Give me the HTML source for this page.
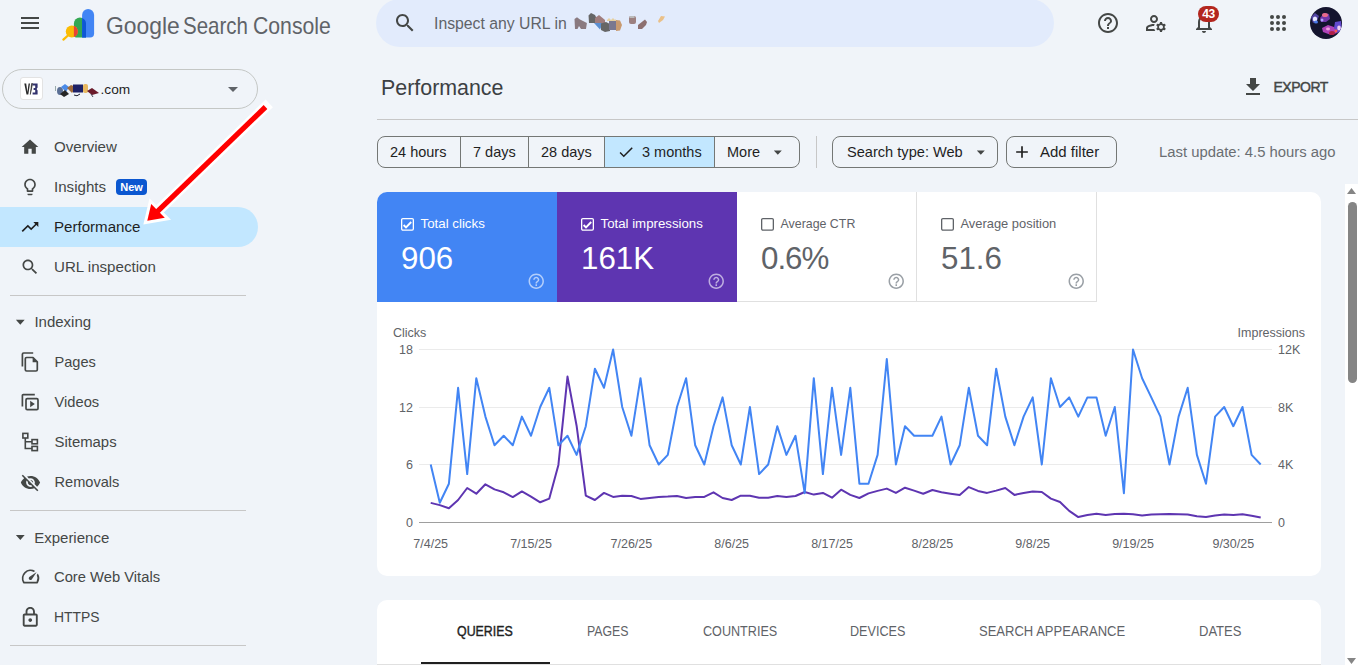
<!DOCTYPE html>
<html><head><meta charset="utf-8"><style>
html,body{margin:0;padding:0;width:1358px;height:665px;overflow:hidden;background:#f0f4f9;position:relative}
body{font-family:"Liberation Sans",sans-serif}
.t{position:absolute;line-height:1;white-space:nowrap}
.box{position:absolute;box-sizing:content-box}
.ic{position:absolute;overflow:visible}
</style></head><body>
<svg class="ic" style="left:18px;top:11px;width:24px;height:24px" viewBox="0 0 24 24"><path fill="#444746" d="M3 18h18v-2H3v2zm0-5h18v-2H3v2zm0-7v2h18V6H3z"/></svg>
<svg class="ic" style="left:58px;top:5px;width:40px;height:40px" viewBox="0 0 40 40">
<path d="M15.9 18.6 A6.05 6.05 0 0 1 28 18.6 V32.5 H19 Q15.9 32.5 15.9 29.4 Z" fill="#34a853"/>
<path d="M24.1 9.9 A6 6 0 0 1 36.1 9.9 V28.5 Q36.1 32.5 32.1 32.5 H24.1 Z" fill="#4285f4"/>
<path d="M24.1 32.5 V12.94 A6.05 6.05 0 0 1 28 18.6 V32.5 Z" fill="#0e58d4"/>
<line x1="10.5" y1="30" x2="5.4" y2="34.6" stroke="#fbbc04" stroke-width="2.3" stroke-linecap="round"/>
<circle cx="13.8" cy="26.4" r="6" fill="#fbbc04"/>
<path d="M15.9 20.78 A6 6 0 0 1 15.9 32.02 Z" fill="#ea4335"/>
</svg>
<div class="t" style="left:105.5px;top:14px;font-size:24px;color:#5f6368;transform:scaleX(0.953);transform-origin:0 0">Google</div>
<div class="t" style="left:183.2px;top:14px;font-size:24px;color:#5f6368;transform:scaleX(0.854);transform-origin:0 0">Search</div>
<div class="t" style="left:252.9px;top:14px;font-size:24px;color:#5f6368;transform:scaleX(0.884);transform-origin:0 0">Console</div>
<div class="box" style="left:376px;top:-1px;width:678px;height:48px;border-radius:24px;background:#e2ebfc"></div>
<svg class="ic" style="left:393px;top:11px;width:24px;height:24px" viewBox="0 0 24 24"><path fill="#444746" d="M15.5 14h-.79l-.28-.27C15.41 12.59 16 11.11 16 9.5 16 5.91 13.09 3 9.5 3S3 5.910 3 9.5 5.91 16 9.5 16c1.61 0 3.09-.59 4.23-1.57l.27.28v.79l5 4.99L20.49 19l-4.99-5zm-6 0C7.01 14 5 11.99 5 9.5S7.01 5 9.5 5 14 7.01 14 9.5 11.99 14 9.5 14z"/></svg>
<div class="t " style="left:433.5px;top:16px;font-size:16.8px;color:#5f6368;font-weight:400;transform:scaleX(0.94);transform-origin:0 0">Inspect any URL in</div>
<svg class="ic" style="left:565px;top:10px;width:110px;height:25px" viewBox="0 0 110 25"><path d="M9.5 9 L12 7.3 L15 9.5 L18 11 L21.9 13 L21 19 L16 19 L14 16 L12.5 19 L10 19 Z" fill="#8a7a80"/><path d="M23.5 5.5 L26 3 L30 5 L31.5 8 L32 13 L24 13 Z" fill="#666"/><path d="M30 8 L34 5 L40 10 L40 13 L30 13 Z" fill="#a07d7d"/><path d="M29 13 H38 L35 19.6 Z" fill="#5b8fd0"/><path d="M36 13.5 L41 12 L45 14 L45 21 L40 22 L36 20 Z" fill="#666"/><rect x="44" y="10" width="7" height="10" fill="#7a7890"/><path d="M51 10 L55 10.5 L57 15 L55 20.5 L51 21 Z" fill="#c89a70"/><path d="M42 10 L44 8 L46 10 L48 8 L50 10 L51 9 V11 H42 Z" fill="#e6d0a0"/><rect x="64" y="6" width="7" height="8" rx="2" fill="#9c8080"/><rect x="64.5" y="6" width="5" height="2" fill="#bbb"/><path d="M73 15 L80 9.5 L82 12 L81 15 L77 19 L73 19 Z" fill="#8d7070"/><path d="M93 11 L96 6 L100 6.5 L98 10 L94 13 Z" fill="#eac088"/></svg>
<svg class="ic" style="left:1096px;top:11px;width:24px;height:24px" viewBox="0 0 24 24"><path fill="#444746" d="M11 18h2v-2h-2v2zm1-16C6.48 2 2 6.48 2 12s4.48 10 10 10 10-4.48 10-10S17.520 2 12 2zm0 18c-4.41 0-8-3.59-8-8s3.59-8 8-8 8 3.59 8 8-3.59 8-8 8zm0-14c-2.21 0-4 1.79-4 4h2c0-1.1.9-2 2-2s2 .9 2 2c0 2-3 1.75-3 5h2c0-2.25 3-2.5 3-5 0-2.21-1.79-4-4-4z"/></svg>
<svg class="ic" style="left:1144px;top:11px;width:24px;height:24px" viewBox="0 0 24 24"><path fill="#444746" d="M4 18v-.65c0-.34.16-.66.41-.81C6.1 15.53 8.03 15 10 15c.03 0 .05 0 .08.01.1-.7.3-1.37.59-1.98-.22-.02-.44-.03-.67-.03-2.42 0-4.68.67-6.61 1.820-.88.52-1.39 1.5-1.39 2.53V20h9.26c-.42-.6-.75-1.28-.97-2H4zm6-6c2.21 0 4-1.79 4-4s-1.79-4-4-4-4 1.79-4 4 1.79 4 4 4zm0-6c1.1 0 2 .9 2 2s-.9 2-2 2-2-.9-2-2 .9-2 2-2zm10.75 10c0-.22-.03-.42-.06-.63l1.14-1.01-1-1.73-1.45.49c-.32-.27-.68-.48-1.08-.63L18 11h-2l-.3 1.49c-.4.15-.76.36-1.08.63l-1.45-.49-1 1.73 1.14 1.01c-.03.21-.06.41-.06.63s.03.42.06.63l-1.14 1.01 1 1.73 1.45-.49c.32.27.68.48 1.08.63L16 21h2l.3-1.49c.4-.15.76-.36 1.08-.63l1.45.49 1-1.73-1.14-1.01c.03-.21.06-.41.06-.63zM17 18c-1.1 0-2-.9-2-2s.9-2 2-2 2 .9 2 2-.9 2-2 2z"/></svg>
<svg class="ic" style="left:1192px;top:11px;width:24px;height:24px" viewBox="0 0 24 24"><path fill="#444746" d="M12 22c1.1 0 2-.9 2-2h-4c0 1.1.89 2 2 2zm6-6v-5c0-3.07-1.64-5.64-4.5-6.32V4c0-.83-.67-1.5-1.5-1.5s-1.5.67-1.5 1.5v.68C7.63 5.36 6 7.92 6 11v5l-2 2v1h16v-1l-2-2zm-2 1H8v-6c0-2.48 1.51-4.5 4-4.5s4 2.02 4 4.5v6z"/></svg>
<div class="box" style="left:1198px;top:6px;width:21px;height:16px;border-radius:8px;background:#b3261e;color:#fff;font:bold 12px/16px 'Liberation Sans';text-align:center;letter-spacing:-0.3px">43</div>
<svg class="ic" style="left:1268px;top:13px;width:16px;height:16px" viewBox="0 0 16 16"><circle cx="4" cy="4" r="2" fill="#444746"/><circle cx="4" cy="10" r="2" fill="#444746"/><circle cx="4" cy="16" r="2" fill="#444746"/><circle cx="10" cy="4" r="2" fill="#444746"/><circle cx="10" cy="10" r="2" fill="#444746"/><circle cx="10" cy="16" r="2" fill="#444746"/><circle cx="16" cy="4" r="2" fill="#444746"/><circle cx="16" cy="10" r="2" fill="#444746"/><circle cx="16" cy="16" r="2" fill="#444746"/></svg>
<div class="box" style="left:1310px;top:7px;width:32px;height:32px;border-radius:50%;overflow:hidden"><svg style="position:absolute;left:0;top:0;width:32px;height:32px" viewBox="0 0 32 32">
<g><rect width="32" height="32" fill="#14142e"/>
<path d="M1 10 L5 6 L9 9 L7 14 L3 16 Z" fill="#5a4ab0" opacity="0.9"/>
<ellipse cx="5" cy="12" rx="2.2" ry="2.6" fill="#e8e8ff"/>
<ellipse cx="6" cy="15" rx="2" ry="1.6" fill="#4a7ae8"/>
<path d="M10 11 L14 6 L19 7 L20 12 L16 15 L11 15 Z" fill="#7a3ab8" opacity="0.9"/>
<ellipse cx="15" cy="8" rx="3" ry="2" fill="#e86a8a"/>
<ellipse cx="12" cy="13" rx="1.5" ry="1.5" fill="#b0a0ff"/>
<path d="M12 21 L18 18 L24 20 L27 26 L21 28 L13 25 Z" fill="#c048c8" opacity="0.9"/>
<ellipse cx="22" cy="26" rx="3" ry="2" fill="#b02048"/>
<ellipse cx="18" cy="22" rx="2" ry="1.4" fill="#f0a0e0"/>
<path d="M25 15 L31 14 L32 24 L27 26 L24 21 Z" fill="#6a50e0" opacity="0.9"/>
<ellipse cx="29" cy="21" rx="1.8" ry="2.4" fill="#f0d0f0"/>
<ellipse cx="26" cy="24" rx="1.4" ry="1.4" fill="#ff5a50"/>
</g></svg></div>
<div class="box" style="left:2px;top:69px;width:254px;height:38px;border:1px solid #c4c7c5;border-radius:20px"></div>
<div class="box" style="left:19.5px;top:77px;width:21px;height:21px;background:#fff;border:1px solid #e3e3e3;border-radius:3px"></div>
<svg class="ic" style="left:24px;top:83px;width:14px;height:12px" viewBox="0 0 14 12"><path d="M0.3 0.5 H2.2 L3.4 9 L4.6 0.5 H6 L4.3 11.5 H2.5 Z" fill="#2a2a2a"/><path d="M6.3 11.5 L8.6 0.5 H7.6 Z" fill="#2a2a2a" stroke="#2a2a2a" stroke-width="0.6"/><path d="M8.6 0.5 H13.6 V4.5 L12.6 6 L13.6 7.5 V11.5 H8.6 V9.5 H11.2 V7 H9.6 V5 H11.2 V2.5 H8.6 Z" fill="#33336e"/></svg>
<svg class="ic" style="left:54px;top:83px;width:48px;height:16px" viewBox="0 0 48 16"><rect x="1" y="3" width="1" height="5" fill="#9aa"/><ellipse cx="6" cy="8" rx="3" ry="4" fill="#5a6f95"/><path d="M7 4 L11 1 L15 4 L12 9 Z" fill="#4a8ae8"/><path d="M6 11 L11 7 L15 11 L10 14 Z" fill="#262626"/><path d="M13 5 L17 2 L22 4 L18 10 Z" fill="#a06a3a"/><rect x="19" y="1.5" width="10" height="8" fill="#1d2166"/><path d="M20 12 Q23 14 26 11" stroke="#223" stroke-width="1" fill="none"/><rect x="29" y="1" width="5" height="9" rx="2" fill="#e8b860"/><path d="M33 8 L38 5 L45 10 L38 12 Z" fill="#6a1a2a"/><path d="M37 11 L39 14" stroke="#445" stroke-width="1"/></svg>
<div class="t " style="left:100.5px;top:83px;font-size:13.7px;color:#1f1f1f;font-weight:400;">.com</div>
<svg class="ic" style="left:221px;top:77px;width:24px;height:24px" viewBox="0 0 24 24"><path fill="#5f6368" d="M7 10l5 5 5-5z"/></svg>
<div class="box" style="left:0;top:207px;width:258px;height:40px;border-radius:0 20px 20px 0;background:#c2e7ff"></div>
<svg class="ic" style="left:20px;top:137px;width:20px;height:20px" viewBox="0 0 24 24"><path fill="#444746" d="M10 20v-6h4v6h5v-8h3L12 3 2 12h3v8z"/></svg>
<div class="t " style="left:54px;top:139px;font-size:15.1px;color:#444746;font-weight:400;">Overview</div>
<svg class="ic" style="left:20px;top:177px;width:20px;height:20px" viewBox="0 0 24 24"><path fill="#444746" d="M9 21c0 .55.45 1 1 1h4c.55 0 1-.45 1-1v-1H9v1zm3-19C8.14 2 5 5.14 5 9c0 2.38 1.19 4.47 3 5.74V17c0 .55.45 1 1 1h6c.55 0 1-.45 1-1v-2.26c1.81-1.27 3-3.36 3-5.74 0-3.86-3.14-7-7-7zm2.85 11.1l-.85.6V16h-4v-2.3l-.85-.6C7.8 12.16 7 10.630 7 9c0-2.76 2.24-5 5-5s5 2.24 5 5c0 1.63-.8 3.16-2.15 4.1z"/></svg>
<div class="t " style="left:54px;top:179px;font-size:15.1px;color:#444746;font-weight:400;">Insights</div>
<svg class="ic" style="left:20px;top:217px;width:20px;height:20px" viewBox="0 0 24 24"><path fill="#1f1f1f" d="M16 6l2.29 2.29-4.88 4.88-4-4L2 16.59 3.41 18l6-6 4 4 6.3-6.29L22 12V6z"/></svg>
<div class="t " style="left:54px;top:219px;font-size:15.1px;color:#1f1f1f;font-weight:400;">Performance</div>
<svg class="ic" style="left:20px;top:257px;width:20px;height:20px" viewBox="0 0 24 24"><path fill="#444746" d="M15.5 14h-.79l-.28-.27C15.41 12.59 16 11.11 16 9.5 16 5.91 13.09 3 9.5 3S3 5.910 3 9.5 5.91 16 9.5 16c1.61 0 3.09-.59 4.23-1.57l.27.28v.79l5 4.99L20.49 19l-4.99-5zm-6 0C7.01 14 5 11.99 5 9.5S7.01 5 9.5 5 14 7.01 14 9.5 11.99 14 9.5 14z"/></svg>
<div class="t " style="left:54px;top:259px;font-size:15.1px;color:#444746;font-weight:400;">URL inspection</div>
<div class="box" style="left:10px;top:229px;width:45px;height:0"></div>
<div class="box" style="left:116px;top:179px;width:31px;height:16px;border-radius:4px;background:#0b57d0;color:#fff;font:bold 11px/16px 'Liberation Sans';text-align:center">New</div>
<div class="box" style="left:10px;top:295px;width:236px;height:1px;background:#c7c7c7"></div>
<svg class="ic" style="left:0;top:0;width:30px;height:665px" viewBox="0 0 30 665"><path d="M15.9 319.8 H24.7 L20.3 324.7 Z M15.9 535 H24.7 L20.3 539.9 Z" fill="#444746"/></svg>
<div class="t " style="left:34.4px;top:314px;font-size:15px;color:#444746;font-weight:400;">Indexing</div>
<svg class="ic" style="left:20px;top:350px;width:20px;height:24px" viewBox="0 0 20 24"><path d="M2.4 16.4 V4.2 Q2.4 3 3.6 3 H13.2" fill="none" stroke="#444746" stroke-width="1.7"/><path d="M6.6 7.5 H13 L17.3 11.8 V19.7 Q17.3 21 16 21 H6.6 Q5.3 21 5.3 19.7 V8.8 Q5.3 7.5 6.6 7.5 Z" fill="none" stroke="#444746" stroke-width="1.7" stroke-linejoin="round"/><path d="M12.6 7.5 L17.3 12.2 H12.6 Z" fill="#444746"/></svg>
<div class="t " style="left:54.5px;top:355px;font-size:14.6px;color:#444746;font-weight:400;">Pages</div>
<svg class="ic" style="left:20px;top:392px;width:20px;height:20px" viewBox="0 0 20 20"><path d="M2.4 14.5 V3.5 Q2.4 2.6 3.3 2.6 H14.8" fill="none" stroke="#444746" stroke-width="1.7"/><rect x="6" y="6.7" width="12" height="10.9" rx="1.2" fill="none" stroke="#444746" stroke-width="1.7"/><path d="M10.2 8.8 L14.8 12.1 L10.2 15.3 Z" fill="#444746"/></svg>
<div class="t " style="left:54.5px;top:395px;font-size:14.7px;color:#444746;font-weight:400;">Videos</div>
<svg class="ic" style="left:20px;top:430px;width:20px;height:24px" viewBox="0 0 20 24"><rect x="2.9" y="3.4" width="4.9" height="4.6" fill="none" stroke="#444746" stroke-width="1.6"/><rect x="12" y="9.6" width="5.4" height="4.2" fill="none" stroke="#444746" stroke-width="1.6"/><rect x="12" y="16.4" width="5.4" height="4.2" fill="none" stroke="#444746" stroke-width="1.6"/><path d="M5.3 8 V18.5 H12 M5.3 11.7 H12" fill="none" stroke="#444746" stroke-width="1.6"/></svg>
<div class="t " style="left:54.5px;top:435px;font-size:14.9px;color:#444746;font-weight:400;">Sitemaps</div>
<svg class="ic" style="left:19.5px;top:472px;width:21px;height:21px" viewBox="0 0 24 24"><path fill="#444746" d="M12 7c2.76 0 5 2.24 5 5 0 .65-.13 1.26-.36 1.83l2.92 2.92c1.51-1.26 2.7-2.89 3.43-4.75-1.73-4.39-6-7.5-11-7.5-1.4 0-2.74.25-3.98.7l2.16 2.16C10.74 7.13 11.35 7 12 7zM2 4.27l2.28 2.28.46.46C3.08 8.3 1.78 10.02 1 12c1.73 4.39 6 7.5 11 7.5 1.55 0 3.03-.3 4.38-.84l.42.42L19.73 22 21 20.73 3.27 3 2 4.27zM7.53 9.8l1.55 1.55c-.05.21-.08.43-.08.65 0 1.66 1.34 3 3 3 .22 0 .44-.03.65-.08l1.55 1.55c-.67.33-1.41.53-2.2.53-2.76 0-5-2.24-5-5 0-.79.2-1.53.53-2.2zm4.31-.78l3.15 3.15.02-.16c0-1.66-1.34-3-3-3l-.17.01z"/></svg>
<div class="t " style="left:54.5px;top:475px;font-size:14.6px;color:#444746;font-weight:400;">Removals</div>
<div class="box" style="left:10px;top:510px;width:236px;height:1px;background:#c7c7c7"></div>
<div class="t " style="left:34.2px;top:530px;font-size:15px;color:#444746;font-weight:400;">Experience</div>
<svg class="ic" style="left:19.5px;top:566px;width:21px;height:21px" viewBox="0 0 24 24"><path fill="#444746" d="M20.38 8.57l-1.23 1.85a8 8 0 0 1-.22 7.58H5.07A8 8 0 0 1 15.58 6.85l1.85-1.23A10 10 0 0 0 3.35 19a2 2 0 0 0 1.72 1h13.85a2 2 0 0 0 1.74-1 10 10 0 0 0-.27-10.440zm-9.79 6.84a2 2 0 0 0 2.830 0l5.66-8.49-8.49 5.66a2 2 0 0 0 0 2.83z"/></svg>
<div class="t " style="left:54px;top:570px;font-size:14.75px;color:#444746;font-weight:400;">Core Web Vitals</div>
<svg class="ic" style="left:18.5px;top:606.3px;width:22.5px;height:22.5px" viewBox="0 0 24 24"><path fill="#444746" d="M18 8h-1V6c0-2.76-2.24-5-5-5S7 3.24 7 6v2H6c-1.1 0-2 .9-2 2v10c0 1.1.9 2 2 2h12c1.1 0 2-.9 2-2V10c0-1.1-.9-2-2-2zM9 6c0-1.66 1.34-3 3-3s3 1.34 3 3v2H9V6zm9 14H6V10h12v10zm-6-3c1.1 0 2-.9 2-2s-.9-2-2-2-2 .9-2 2 .9 2 2 2z"/></svg>
<div class="t " style="left:54px;top:611px;font-size:13.9px;color:#444746;font-weight:400;">HTTPS</div>
<div class="box" style="left:10px;top:645px;width:236px;height:1px;background:#c7c7c7"></div>
<div class="t " style="left:381px;top:78px;font-size:21.4px;color:#3c4043;font-weight:400;">Performance</div>
<svg class="ic" style="left:1241px;top:75px;width:24px;height:24px" viewBox="0 0 24 24"><path fill="#444746" d="M19 9h-4V3H9v6H5l7 7 7-7zM5 18v2h14v-2H5z"/></svg>
<div class="t " style="left:1273.5px;top:80px;font-size:14px;color:#444746;font-weight:400;letter-spacing:-0.5px;-webkit-text-stroke:0.45px #444746">EXPORT</div>
<div class="box" style="left:377px;top:119px;width:981px;height:1px;background:#c7c7c7"></div>
<div class="box" style="left:377px;top:136px;width:421px;height:30px;border:1px solid #747775;border-radius:8px;overflow:hidden"></div>
<div class="box" style="left:605px;top:137px;width:109px;height:30px;background:#c2e7ff"></div>
<div class="box" style="left:460px;top:137px;width:1px;height:30px;background:#747775"></div>
<div class="box" style="left:528px;top:137px;width:1px;height:30px;background:#747775"></div>
<div class="box" style="left:604px;top:137px;width:1px;height:30px;background:#747775"></div>
<div class="box" style="left:714px;top:137px;width:1px;height:30px;background:#747775"></div>
<div class="t " style="left:390px;top:145px;font-size:14.5px;color:#1f1f1f;font-weight:400;">24 hours</div>
<div class="t " style="left:473px;top:145px;font-size:14.5px;color:#1f1f1f;font-weight:400;">7 days</div>
<div class="t " style="left:541px;top:145px;font-size:14.5px;color:#1f1f1f;font-weight:400;">28 days</div>
<svg class="ic" style="left:617px;top:143px;width:18px;height:18px" viewBox="0 0 24 24"><path fill="#1f1f1f" d="M9 16.17L4.83 12l-1.42 1.41L9 19 21 7l-1.41-1.41z"/></svg>
<div class="t " style="left:642px;top:145px;font-size:14.5px;color:#1f1f1f;font-weight:400;">3 months</div>
<div class="t " style="left:727px;top:145px;font-size:14.5px;color:#1f1f1f;font-weight:400;">More</div>
<svg class="ic" style="left:0;top:0;width:1000px;height:200px" viewBox="0 0 1000 200"><path d="M773.8 150.6 H781.8 L777.8 154.8 Z M976.8 150.6 H984.8 L980.8 154.8 Z" fill="#444746"/></svg>
<div class="box" style="left:816px;top:136px;width:1px;height:32px;background:#c7c7c7"></div>
<div class="box" style="left:832px;top:136px;width:164px;height:30px;border:1px solid #747775;border-radius:8px"></div>
<div class="t " style="left:847px;top:145px;font-size:14.6px;color:#1f1f1f;font-weight:400;">Search type: Web</div>
<div class="box" style="left:1006px;top:136px;width:109px;height:30px;border:1px solid #747775;border-radius:8px"></div>
<svg class="ic" style="left:1012px;top:142px;width:20px;height:20px" viewBox="0 0 24 24"><path fill="#1f1f1f" d="M19 13h-6v6h-2v-6H5v-2h6V5h2v6h6v2z"/></svg>
<div class="t " style="left:1040px;top:144px;font-size:15px;color:#1f1f1f;font-weight:400;">Add filter</div>
<div class="t " style="left:1159px;top:145px;font-size:14.85px;color:#6a6e72;font-weight:400;">Last update: 4.5 hours ago</div>
<div class="box" style="left:377px;top:192px;width:944px;height:384px;background:#fff;border-radius:10px;overflow:hidden"><div class="box" style="left:0;top:0;width:180px;height:110px;background:#4285f4"></div><div class="box" style="left:180px;top:0;width:180px;height:110px;background:#5e35b1"></div><div class="box" style="left:360px;top:0;width:179px;height:109px;border-right:1px solid #e0e0e0;border-bottom:1px solid #e0e0e0"></div><div class="box" style="left:540px;top:0;width:179px;height:109px;border-right:1px solid #e0e0e0;border-bottom:1px solid #e0e0e0"></div></div>
<svg class="ic" style="left:401px;top:218px;width:13px;height:13px" viewBox="0 0 13 13"><rect x="0.65" y="0.65" width="11.7" height="11.4" rx="1.2" fill="none" stroke="#fff" stroke-width="1.3"/><path d="M2.6 7 L5 9.4 L10.2 4" fill="none" stroke="#fff" stroke-width="1.9"/></svg>
<div class="t " style="left:420.5px;top:217px;font-size:13.3px;color:#fff;font-weight:400;">Total clicks</div>
<div class="t " style="left:401px;top:243px;font-size:31.3px;color:#fff;font-weight:400;">906</div>
<svg class="ic" style="left:527px;top:271.8px;width:18.5px;height:18.5px" viewBox="0 0 24 24"><path fill="rgba(255,255,255,0.6)" d="M11 18h2v-2h-2v2zm1-16C6.48 2 2 6.48 2 12s4.48 10 10 10 10-4.48 10-10S17.520 2 12 2zm0 18c-4.41 0-8-3.59-8-8s3.59-8 8-8 8 3.59 8 8-3.59 8-8 8zm0-14c-2.21 0-4 1.79-4 4h2c0-1.1.9-2 2-2s2 .9 2 2c0 2-3 1.75-3 5h2c0-2.25 3-2.5 3-5 0-2.21-1.79-4-4-4z"/></svg>
<svg class="ic" style="left:581px;top:218px;width:13px;height:13px" viewBox="0 0 13 13"><rect x="0.65" y="0.65" width="11.7" height="11.4" rx="1.2" fill="none" stroke="#fff" stroke-width="1.3"/><path d="M2.6 7 L5 9.4 L10.2 4" fill="none" stroke="#fff" stroke-width="1.9"/></svg>
<div class="t " style="left:600.5px;top:217px;font-size:13.25px;color:#fff;font-weight:400;">Total impressions</div>
<div class="t " style="left:581px;top:243px;font-size:31.3px;color:#fff;font-weight:400;">161K</div>
<svg class="ic" style="left:707px;top:271.8px;width:18.5px;height:18.5px" viewBox="0 0 24 24"><path fill="rgba(255,255,255,0.6)" d="M11 18h2v-2h-2v2zm1-16C6.48 2 2 6.48 2 12s4.48 10 10 10 10-4.48 10-10S17.520 2 12 2zm0 18c-4.41 0-8-3.59-8-8s3.59-8 8-8 8 3.59 8 8-3.59 8-8 8zm0-14c-2.21 0-4 1.79-4 4h2c0-1.1.9-2 2-2s2 .9 2 2c0 2-3 1.75-3 5h2c0-2.25 3-2.5 3-5 0-2.21-1.79-4-4-4z"/></svg>
<svg class="ic" style="left:761px;top:218px;width:13px;height:13px" viewBox="0 0 13 13"><rect x="0.65" y="0.65" width="11.7" height="11.4" rx="1.2" fill="none" stroke="#5f6368" stroke-width="1.3"/></svg>
<div class="t " style="left:780.5px;top:218px;font-size:12.4px;color:#5f6368;font-weight:400;">Average CTR</div>
<div class="t " style="left:761px;top:243px;font-size:31.3px;color:#5f6368;font-weight:400;letter-spacing:-1px">0.6%</div>
<svg class="ic" style="left:887px;top:271.8px;width:18.5px;height:18.5px" viewBox="0 0 24 24"><path fill="#9aa0a6" d="M11 18h2v-2h-2v2zm1-16C6.48 2 2 6.48 2 12s4.48 10 10 10 10-4.48 10-10S17.520 2 12 2zm0 18c-4.41 0-8-3.59-8-8s3.59-8 8-8 8 3.59 8 8-3.59 8-8 8zm0-14c-2.21 0-4 1.79-4 4h2c0-1.1.9-2 2-2s2 .9 2 2c0 2-3 1.75-3 5h2c0-2.25 3-2.5 3-5 0-2.21-1.79-4-4-4z"/></svg>
<svg class="ic" style="left:941px;top:218px;width:13px;height:13px" viewBox="0 0 13 13"><rect x="0.65" y="0.65" width="11.7" height="11.4" rx="1.2" fill="none" stroke="#5f6368" stroke-width="1.3"/></svg>
<div class="t " style="left:960.5px;top:218px;font-size:12.9px;color:#5f6368;font-weight:400;">Average position</div>
<div class="t " style="left:941px;top:243px;font-size:31.3px;color:#5f6368;font-weight:400;">51.6</div>
<svg class="ic" style="left:1067px;top:271.8px;width:18.5px;height:18.5px" viewBox="0 0 24 24"><path fill="#9aa0a6" d="M11 18h2v-2h-2v2zm1-16C6.48 2 2 6.48 2 12s4.48 10 10 10 10-4.48 10-10S17.520 2 12 2zm0 18c-4.41 0-8-3.59-8-8s3.59-8 8-8 8 3.59 8 8-3.59 8-8 8zm0-14c-2.21 0-4 1.79-4 4h2c0-1.1.9-2 2-2s2 .9 2 2c0 2-3 1.75-3 5h2c0-2.25 3-2.5 3-5 0-2.21-1.79-4-4-4z"/></svg>
<div class="t " style="left:393px;top:327px;font-size:12.5px;color:#5f6368;font-weight:400;">Clicks</div>
<div class="t" style="left:1200px;top:327px;width:105px;text-align:right;font-size:12.5px;color:#5f6368">Impressions</div>
<div class="t" style="left:380px;top:344px;width:33px;text-align:right;font-size:12.5px;color:#5f6368">18</div>
<div class="t" style="left:380px;top:402px;width:33px;text-align:right;font-size:12.5px;color:#5f6368">12</div>
<div class="t" style="left:380px;top:459px;width:33px;text-align:right;font-size:12.5px;color:#5f6368">6</div>
<div class="t" style="left:380px;top:517px;width:33px;text-align:right;font-size:12.5px;color:#5f6368">0</div>
<div class="t" style="left:1278px;top:344px;font-size:12.5px;color:#5f6368">12K</div>
<div class="t" style="left:1278px;top:402px;font-size:12.5px;color:#5f6368">8K</div>
<div class="t" style="left:1278px;top:459px;font-size:12.5px;color:#5f6368">4K</div>
<div class="t" style="left:1278px;top:517px;font-size:12.5px;color:#5f6368">0</div>
<div class="t" style="left:390.7px;top:538px;width:80px;text-align:center;font-size:12.5px;color:#5f6368">7/4/25</div>
<div class="t" style="left:491.0px;top:538px;width:80px;text-align:center;font-size:12.5px;color:#5f6368">7/15/25</div>
<div class="t" style="left:591.4px;top:538px;width:80px;text-align:center;font-size:12.5px;color:#5f6368">7/26/25</div>
<div class="t" style="left:691.7px;top:538px;width:80px;text-align:center;font-size:12.5px;color:#5f6368">8/6/25</div>
<div class="t" style="left:792.0px;top:538px;width:80px;text-align:center;font-size:12.5px;color:#5f6368">8/17/25</div>
<div class="t" style="left:892.4px;top:538px;width:80px;text-align:center;font-size:12.5px;color:#5f6368">8/28/25</div>
<div class="t" style="left:992.7px;top:538px;width:80px;text-align:center;font-size:12.5px;color:#5f6368">9/8/25</div>
<div class="t" style="left:1093.0px;top:538px;width:80px;text-align:center;font-size:12.5px;color:#5f6368">9/19/25</div>
<div class="t" style="left:1193.3px;top:538px;width:80px;text-align:center;font-size:12.5px;color:#5f6368">9/30/25</div>
<svg class="ic" style="left:0;top:0;width:1358px;height:665px" viewBox="0 0 1358 665"><line x1="419" x2="1272" y1="349.5" y2="349.5" stroke="#ebebeb" stroke-width="1"/><line x1="419" x2="1272" y1="407.5" y2="407.5" stroke="#ebebeb" stroke-width="1"/><line x1="419" x2="1272" y1="464.5" y2="464.5" stroke="#ebebeb" stroke-width="1"/>
<line x1="419" x2="1272" y1="522.5" y2="522.5" stroke="#9e9e9e" stroke-width="1"/>
<polyline points="430.7,502.9 439.8,505.1 448.9,508.3 458.1,500.0 467.2,488.0 476.3,493.7 485.4,484.3 494.5,489.4 503.7,492.3 512.8,497.1 521.9,491.4 531.0,496.6 540.2,502.3 549.3,498.6 558.4,464.9 567.5,376.6 576.6,425.7 585.8,495.7 594.9,500.0 604.0,492.9 613.1,496.9 622.2,495.7 631.4,496.0 640.5,498.9 649.6,498.0 658.7,496.9 667.8,496.6 677.0,496.0 686.1,498.0 695.2,496.9 704.3,496.9 713.5,492.3 722.6,498.0 731.7,500.0 740.8,495.7 749.9,495.7 759.1,497.7 768.2,497.7 777.3,496.0 786.4,497.1 795.5,496.0 804.7,492.0 813.8,494.6 822.9,492.9 832.0,497.7 841.1,489.7 850.3,494.9 859.4,498.0 868.5,493.4 877.6,490.9 886.8,488.6 895.9,492.9 905.0,487.7 914.1,490.6 923.2,493.7 932.4,490.0 941.5,492.3 950.6,493.7 959.7,495.1 968.8,487.1 978.0,490.9 987.1,492.9 996.2,490.6 1005.3,488.0 1014.4,494.9 1023.6,492.9 1032.7,491.4 1041.8,492.0 1050.9,498.6 1060.0,502.0 1069.2,510.9 1078.3,517.1 1087.4,515.1 1096.5,513.7 1105.7,514.9 1114.8,514.0 1123.9,513.7 1133.0,514.3 1142.1,515.4 1151.3,514.6 1160.4,514.3 1169.5,514.0 1178.6,514.3 1187.7,514.6 1196.9,516.3 1206.0,516.9 1215.1,515.4 1224.2,514.6 1233.3,514.9 1242.5,514.3 1251.6,515.7 1260.7,517.4" fill="none" stroke="#5e35b1" stroke-width="2" stroke-linejoin="round"/>
<polyline points="430.7,464.5 439.8,502.8 448.9,483.7 458.1,387.8 467.2,474.1 476.3,378.2 485.4,416.6 494.5,445.3 503.7,435.8 512.8,445.3 521.9,416.6 531.0,435.8 540.2,407.0 549.3,387.8 558.4,445.3 567.5,435.8 576.6,454.9 585.8,426.2 594.9,368.7 604.0,387.8 613.1,349.5 622.2,407.0 631.4,435.8 640.5,378.2 649.6,445.3 658.7,464.5 667.8,454.9 677.0,407.0 686.1,378.2 695.2,445.3 704.3,464.5 713.5,426.2 722.6,397.4 731.7,445.3 740.8,464.5 749.9,407.0 759.1,474.1 768.2,464.5 777.3,426.2 786.4,454.9 795.5,435.8 804.7,493.2 813.8,378.2 822.9,474.1 832.0,387.8 841.1,454.9 850.3,387.8 859.4,483.7 868.5,483.7 877.6,454.9 886.8,359.1 895.9,464.5 905.0,426.2 914.1,435.8 923.2,435.8 932.4,435.8 941.5,416.6 950.6,464.5 959.7,445.3 968.8,387.8 978.0,435.8 987.1,445.3 996.2,368.7 1005.3,416.6 1014.4,445.3 1023.6,416.6 1032.7,397.4 1041.8,464.5 1050.9,378.2 1060.0,407.0 1069.2,397.4 1078.3,416.6 1087.4,397.4 1096.5,397.4 1105.7,435.8 1114.8,407.0 1123.9,493.2 1133.0,349.5 1142.1,378.2 1151.3,397.4 1160.4,416.6 1169.5,464.5 1178.6,416.6 1187.7,387.8 1196.9,454.9 1206.0,483.7 1215.1,416.6 1224.2,407.0 1233.3,426.2 1242.5,407.0 1251.6,454.9 1260.7,464.5" fill="none" stroke="#4285f4" stroke-width="2" stroke-linejoin="round"/>
</svg>
<div class="box" style="left:377px;top:600px;width:944px;height:80px;background:#fff;border-radius:10px"></div>
<div class="box" style="left:377px;top:664px;width:944px;height:1px;background:#e0e0e0"></div>
<div class="t " style="left:457px;top:624px;font-size:14px;color:#1f1f1f;font-weight:400;transform:scaleX(0.885);transform-origin:0 0;-webkit-text-stroke:0.4px #1f1f1f">QUERIES</div>
<div class="t " style="left:586.7px;top:624px;font-size:14px;color:#5f6368;font-weight:400;transform:scaleX(0.88);transform-origin:0 0">PAGES</div>
<div class="t " style="left:702.5px;top:624px;font-size:14px;color:#5f6368;font-weight:400;transform:scaleX(0.9);transform-origin:0 0">COUNTRIES</div>
<div class="t " style="left:850.2px;top:624px;font-size:14px;color:#5f6368;font-weight:400;transform:scaleX(0.9);transform-origin:0 0">DEVICES</div>
<div class="t " style="left:979.3px;top:624px;font-size:14px;color:#5f6368;font-weight:400;transform:scaleX(0.93);transform-origin:0 0">SEARCH APPEARANCE</div>
<div class="t " style="left:1199.3px;top:624px;font-size:14px;color:#5f6368;font-weight:400;transform:scaleX(0.93);transform-origin:0 0">DATES</div>
<div class="box" style="left:421px;top:662px;width:129px;height:2px;background:#1f1f1f"></div>
<div class="box" style="left:1345px;top:184px;width:13px;height:481px;background:#fff"></div>
<div class="box" style="left:1348px;top:202px;width:9px;height:181px;border-radius:5px;background:#858585"></div>
<svg class="ic" style="left:1346px;top:187px;width:11px;height:8px" viewBox="0 0 11 8"><path d="M5.5 1 L10 7 H1 Z" fill="#858585"/></svg>
<svg class="ic" style="left:1346px;top:657px;width:11px;height:8px" viewBox="0 0 11 8"><path d="M1 1 H10 L5.5 7 Z" fill="#858585"/></svg>
<svg class="ic" style="left:0;top:0;width:1358px;height:665px" viewBox="0 0 1358 665">
<line x1="265.5" y1="107" x2="158" y2="210.9" stroke="#fff" stroke-width="10.5" stroke-linecap="square"/>
<path d="M147.3 220.7 L151.2 204.1 L164.8 217.7 Z" fill="#fff" stroke="#fff" stroke-width="6" stroke-linejoin="miter" stroke-miterlimit="10"/>
<line x1="265.5" y1="107" x2="156" y2="212.8" stroke="#f00" stroke-width="5.3"/>
<path d="M147.3 220.7 L151.2 204.1 L164.8 217.7 Z" fill="#f00"/>
</svg>
</body></html>
